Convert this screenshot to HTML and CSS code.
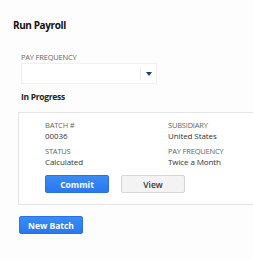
FILE: index.html
```html
<!DOCTYPE html>
<html lang="en">
<head>
    <meta charset="UTF-8">
    <meta name="viewport" content="width=device-width, initial-scale=1.0">
    <title>Run Payroll</title>
    <link rel="stylesheet" href="styles.css">
</head>
<body>
    <div class="page">
        <h2 class="title">Run Payroll</h2>
        <div class="field">
            <label class="label">PAY FREQUENCY</label>
            <div class="select">
                <span class="select-value"></span>
                <span class="select-arrow">
                    <svg width="6" height="4" viewBox="0 0 6 4"><path d="M0 0H6L3 4Z" fill="#1a3c8c"/></svg>
                </span>
            </div>
        </div>
        <h3 class="section">In Progress</h3>
        <div class="card">
            <div class="grid">
                <div class="item">
                    <div class="label">BATCH #</div>
                    <div class="value">00036</div>
                </div>
                <div class="item">
                    <div class="label">SUBSIDIARY</div>
                    <div class="value">United States</div>
                </div>
                <div class="item">
                    <div class="label">STATUS</div>
                    <div class="value">Calculated</div>
                </div>
                <div class="item">
                    <div class="label">PAY FREQUENCY</div>
                    <div class="value">Twice a Month</div>
                </div>
            </div>
            <div class="actions">
                <button class="btn primary">Commit</button>
                <button class="btn secondary">View</button>
            </div>
        </div>
        <button class="btn primary new">New Batch</button>
    </div>
</body>
</html>
```

FILE: styles.css
```css
body {
    margin: 0;
    background: #fdfdfd;
    font-family: "Open Sans", "Noto Sans", sans-serif;
    color: #222;
}
.page {
    padding: 18px 0 0 13px;
}
.title {
    margin: 0 0 20px;
    font-size: 10px;
    font-weight: 700;
    line-height: 14px;
    letter-spacing: -0.4px;
    color: #111;
}
.field {
    margin-left: 8px;
}
.label {
    display: block;
    font-size: 7.5px;
    line-height: 10px;
    color: #666;
    letter-spacing: -0.2px;
}
.select {
    display: flex;
    width: 136px;
    height: 21px;
    margin-top: 1px;
    border: 1px solid #f0f0f0;
    box-sizing: border-box;
    background: #fff;
}
.select-value {
    flex: 1;
    border-right: 1px solid #ececec;
    margin: 3px 0;
}
.select-arrow {
    width: 15px;
    display: flex;
    align-items: center;
    justify-content: center;
}
.section {
    margin: 7px 0 0 8px;
    font-size: 8.5px;
    font-weight: 700;
    line-height: 12px;
    letter-spacing: -0.3px;
    color: #222;
}
.card {
    margin: 9px 0 0 5px;
    padding: 7px 0 11px 26px;
    border: 1px solid #e4e4e4;
    border-right: none;
    background: #fff;
}
.grid {
    display: grid;
    grid-template-columns: 123px 1fr;
    row-gap: 5px;
}
.item .label {
    line-height: 10px;
}
.item .value {
    font-size: 8px;
    line-height: 11px;
    letter-spacing: -0.1px;
    color: #333;
}
.actions {
    display: flex;
    gap: 12px;
    margin-top: 8px;
}
.btn {
    width: 64px;
    height: 18px;
    padding: 0;
    border-radius: 2px;
    font-family: "Open Sans", "Noto Sans", sans-serif;
    font-size: 8.5px;
    font-weight: 700;
    cursor: pointer;
}
.primary {
    background: linear-gradient(#3a8cf7, #2a78ee);
    border: 1px solid #2a72e0;
    color: #fff;
}
.secondary {
    background: #f3f3f3;
    border: 1px solid #d6d6d6;
    color: #333;
    font-weight: 600;
}
.new {
    margin: 11px 0 0 6px;
}
```
